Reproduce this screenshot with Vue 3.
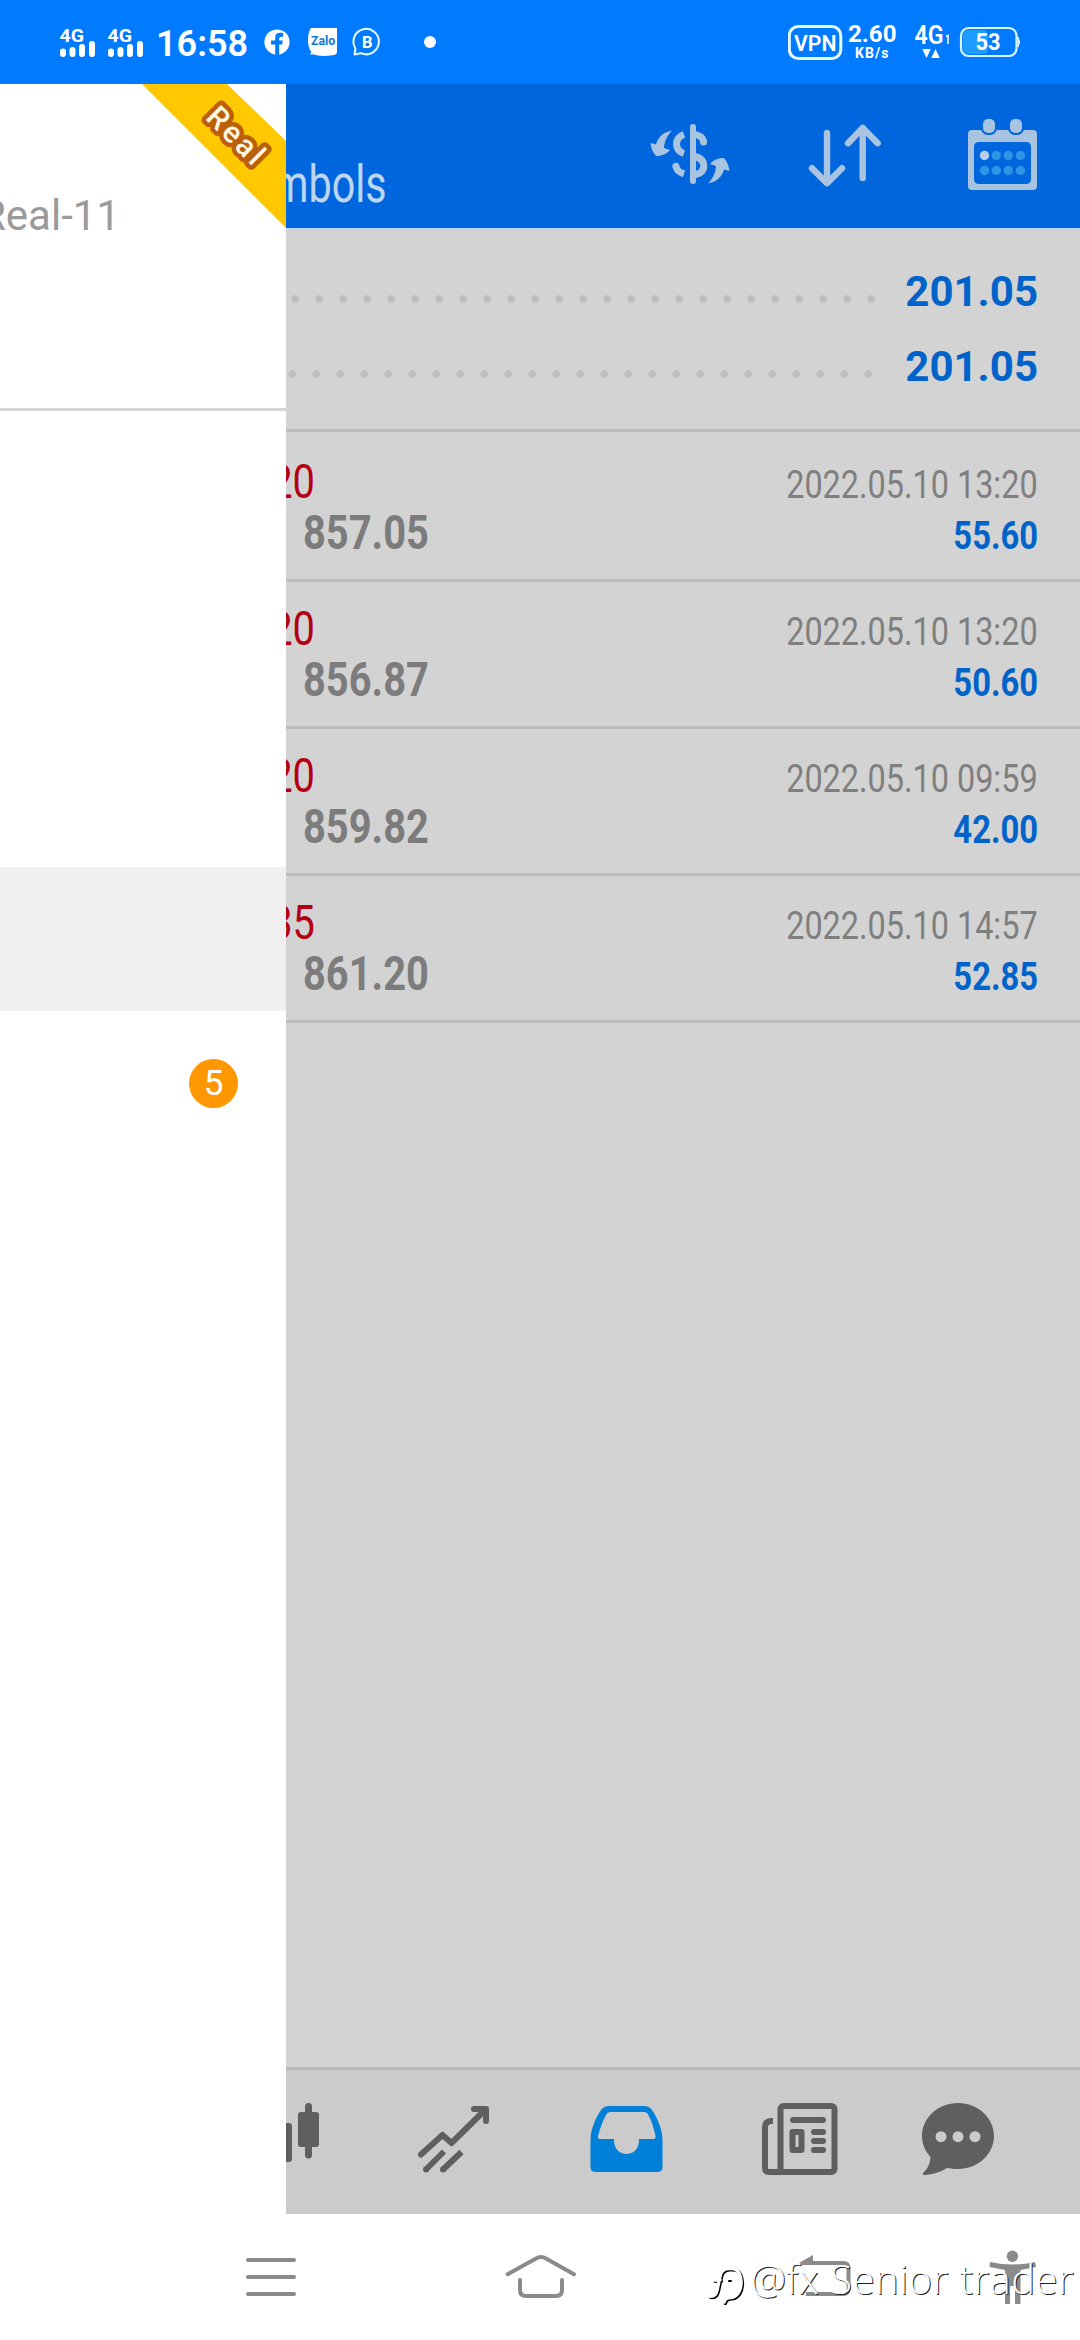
<script setup>
const deals = [
  { open: '20', close: '857.05', time: '2022.05.10 13:20', profit: '55.60' },
  { open: '20', close: '856.87', time: '2022.05.10 13:20', profit: '50.60' },
  { open: '20', close: '859.82', time: '2022.05.10 09:59', profit: '42.00' },
  { open: '35', close: '861.20', time: '2022.05.10 14:57', profit: '52.85' },
]
const calendarDots = [996.3, 1008.3, 1020.4]
const swapArrow =
  'M672 130.5C662 132.5 658 138 656 144.5L650.5 143C651 148 653.5 154 656.5 156C661 156.3 667 154 670 150L664 148C664.5 141 667 136 672 130.5Z'
</script>

<template>
  <div class="screen">
    <header class="status">
      <svg v-for="n in 2" :key="n" class="signal" viewBox="58 20 40 44" width="40" height="44">
        <text x="59.5" y="41.6" font-size="19" font-weight="700" textLength="24.5" lengthAdjust="spacingAndGlyphs">4G</text>
        <path d="M63 51.5V54M72.5 50V54M82 47V54M92 44V54" stroke="#fff" stroke-width="6" stroke-linecap="round" />
      </svg>
      <span class="clock">16:58</span>
      <svg class="fb" viewBox="264 29 26 26" width="26" height="26">
        <circle cx="277" cy="42" r="12.6" fill="#fff" />
        <path d="M275.2 55V44.6H271V40.4H275.2V38.2C275.2 34 277.6 32.2 283 33.1V36.8C280.2 36.5 279.2 37.1 279.2 39V40.4H282.8L282.2 44.6H279.2V55Z" fill="#007bff" />
      </svg>
      <svg class="zalo" viewBox="308 27 30 29" width="30" height="29">
        <path d="M311 27H337V51Q337 54 332 54.3C325 55.5 317 55 313.5 53.3Q311 54 310 53Q312 51.5 311 50.5C307 45 307 33 311 27Z" fill="#fff" />
        <text x="311" y="44.3" font-size="12" font-weight="700" class="blue" textLength="24" lengthAdjust="spacingAndGlyphs">Zalo</text>
      </svg>
      <svg class="biz" viewBox="352 27 30 30" width="30" height="30">
        <path d="M354.5 54.5L355.5 48.5A12.7 12.7 0 1 1 361 53.2Z" fill="none" stroke="#e6fbff" stroke-width="2" stroke-linejoin="round" />
        <text x="362" y="47.8" font-size="16" font-weight="700" textLength="10.5" lengthAdjust="spacingAndGlyphs">B</text>
      </svg>
      <i class="more-dot"></i>
      <span class="spacer"></span>
      <svg viewBox="788 12 236 60" width="236" height="60">
        <rect x="789.3" y="26.5" width="51.5" height="32" rx="9" fill="none" stroke="#e6fbff" stroke-width="3" />
        <text x="794" y="51" font-size="21.5" font-weight="600" textLength="42.5" lengthAdjust="spacingAndGlyphs">VPN</text>
        <text x="848" y="42" font-size="24" font-weight="700" textLength="48.5" lengthAdjust="spacingAndGlyphs">2.60</text>
        <text x="855" y="58" font-size="14" font-weight="700" textLength="33.5" lengthAdjust="spacing">KB/s</text>
        <text x="914.5" y="44" font-size="25" font-weight="600" textLength="29" lengthAdjust="spacingAndGlyphs">4G</text>
        <path d="M946 36.5L948 35.5V44" stroke="#fff" stroke-width="1.5" fill="none" />
        <path d="M922.2 49H930.8L926.5 58ZM931.2 58H939.8L935.5 49Z" fill="#fff" />
        <rect x="963" y="30" width="25" height="24" rx="5" fill="#1f9cff" />
        <rect x="961" y="28" width="55.5" height="28" rx="7.5" fill="none" stroke="#d8f6ff" stroke-width="2.2" />
        <path d="M1018 37Q1021 42 1018 47Z" fill="#d8f6ff" stroke="#d8f6ff" />
        <text x="975.5" y="50.3" font-size="23.5" font-weight="700" textLength="25" lengthAdjust="spacingAndGlyphs">53</text>
      </svg>
    </header>

    <div class="body">
      <aside class="drawer">
        <div class="account">
          <span class="server">Real-11</span>
          <svg class="ribbon" viewBox="142 84 144 144" width="144" height="144">
            <path d="M142 84H227L286 141V228Z" fill="#ffc800" />
            <text transform="translate(204.5 118.5) rotate(45)" font-size="30" font-weight="500" textLength="68" lengthAdjust="spacing">Real</text>
          </svg>
        </div>
        <ul class="menu">
          <li></li>
          <li></li>
          <li></li>
          <li class="selected"></li>
          <li><b class="badge">5</b></li>
        </ul>
      </aside>

      <main class="history">
        <div class="toolbar">
          <span class="filter"><span>Symbols</span></span>
          <div class="actions">
            <svg viewBox="650 116 80 76" width="80" height="76">
              <g fill="none" stroke="#a8c4e0" stroke-width="7">
                <path d="M684 134.5C674 138 674 150 684 153.5" />
                <path d="M684 174C679.5 172.5 676.5 169.5 676 166.5" />
                <path d="M675.9 166.2V166.3M703.6 141.9V142" stroke-linecap="round" />
                <path d="M693 134.5C699 134.5 703 137.5 703.6 142" />
                <path d="M693 156C701 157.5 703.8 161.5 703.8 166C703.8 171 700 174.5 693 174.8" />
                <path d="M693 127V181" stroke-width="6" stroke-linecap="round" />
              </g>
              <g fill="#a8c4e0">
                <path :d="swapArrow" />
                <path :d="swapArrow" transform="rotate(180 690 157)" />
              </g>
            </svg>
            <svg class="sort" viewBox="808 116 76 76" width="76" height="76">
              <path d="M828 133V183M813 168.2L828 183.2L843 168.2M863.7 178V128M849 143.2L863.7 128L878.7 143.2" fill="none" stroke="#a8c4e0" stroke-width="6.4" stroke-linecap="round" stroke-linejoin="round" />
            </svg>
            <svg class="calendar" viewBox="967 116 71 76" width="71" height="76">
              <path fill-rule="evenodd" d="M972 130H1033Q1037 130 1037 134V186Q1037 190 1033 190H972Q968 190 968 186V134Q968 130 972 130ZM979 142Q974 142 974 147V179Q974 184 979 184H1026Q1031 184 1031 179V147Q1031 142 1026 142Z" fill="#a8c4e0" />
              <g fill="#a8c4e0" stroke="#0066dd" stroke-width="4" paint-order="stroke">
                <rect x="983" y="119" width="12" height="14" rx="5" />
                <rect x="1010" y="119" width="12" height="14" rx="5" />
              </g>
              <circle cx="984.5" cy="155.5" r="4.7" fill="#b8cfea" />
              <circle cx="984.5" cy="170.5" r="4.7" fill="#2e94e6" />
              <g v-for="x in calendarDots" :key="x" fill="#2e94e6">
                <circle :cx="x" cy="155.5" r="4.7" />
                <circle :cx="x" cy="170.5" r="4.7" />
              </g>
            </svg>
          </div>
        </div>

        <section class="totals">
          <div class="total"><i class="leader"></i><b>201.05</b></div>
          <div class="total"><i class="leader shifted"></i><b>201.05</b></div>
        </section>

        <ul class="deals">
          <li v-for="d in deals" :key="d.close" class="deal">
            <div class="prices">
              <span class="open"><span>{{ d.open }}</span></span>
              <span class="close">{{ d.close }}</span>
            </div>
            <div class="result">
              <span class="time">{{ d.time }}</span>
              <span class="profit">{{ d.profit }}</span>
            </div>
          </li>
        </ul>

        <nav class="tabs">
          <svg viewBox="286 2100 36 76" width="36" height="76">
            <path d="M280 2123H289Q292 2123 292 2126V2159Q292 2162 289 2162H280Z" fill="#5f5f5f" />
            <rect x="298" y="2112" width="21" height="35" rx="3" fill="#5f5f5f" />
            <path d="M308.5 2106.5V2155" stroke="#5f5f5f" stroke-width="7" stroke-linecap="round" />
          </svg>
          <svg class="trend" viewBox="416 2100 76 76" width="76" height="76">
            <g fill="none" stroke="#5f5f5f" stroke-width="6">
              <path d="M421 2154.5L442.5 2135L451.5 2143L485 2110" stroke-linecap="round" stroke-linejoin="round" />
              <path d="M474 2109H486V2121" stroke-linecap="round" stroke-linejoin="round" />
              <path d="M425.5 2170L444 2151.5M442.5 2170L461.500 2152" />
              <path d="M426 2169.5V2169.4M443 2169.5V2169.4" stroke-linecap="round" />
            </g>
          </svg>
          <svg class="inbox" viewBox="588 2100 76 76" width="76" height="76">
            <path fill-rule="evenodd" d="M609 2106H644Q649 2106 652 2110C658 2119 662.5 2130 662.5 2140V2167Q662.5 2172 657.5 2172H595.5Q590.5 2172 590.5 2167V2140C590.5 2130 595 2119 601 2110Q604 2106 609 2106ZM610 2112Q607.5 2112 606 2115C602 2122 600 2129 598 2136Q597.5 2139 600 2139H614C613 2159 640 2159 639 2139H653Q656 2139 655.5 2136C654 2129 652 2122 648.5 2115Q647 2112 644 2112Z" fill="#0080d8" />
          </svg>
          <svg class="news" viewBox="760 2100 80 76" width="80" height="76">
            <g fill="none" stroke="#5f5f5f" stroke-width="6">
              <rect x="780.5" y="2106" width="54" height="66" rx="3" />
              <path d="M773 2121H771Q765 2121.5 765 2127V2168Q765 2172 769 2172H783" />
              <path d="M793 2120H823M814 2132H823M814 2141H823M814 2150H823" stroke-linecap="round" />
              <rect x="792.5" y="2132" width="9" height="18" stroke-linejoin="round" />
            </g>
          </svg>
          <svg class="chat" viewBox="920 2100 76 76" width="76" height="76">
            <path fill-rule="evenodd" d="M958 2103C978 2103 994 2118 994 2136C994 2154 978 2169 958 2169C954 2169 950 2168.5 947 2168C940 2172.5 932 2174.5 924.5 2175Q921.5 2174.5 923.5 2172.5C928.5 2168 930 2163 930.5 2157C925 2151 922 2144 922 2136C922 2118 938 2103 958 2103Z" fill="#5f5f5f" />
            <g fill="#cbcbcb"><circle cx="941" cy="2136.7" r="5.5" /><circle cx="958" cy="2136.7" r="5.5" /><circle cx="975" cy="2136.7" r="5.5" /></g>
          </svg>
        </nav>
      </main>
    </div>

    <footer class="sysnav">
      <svg viewBox="244 2246 54 60" width="54" height="60">
        <path d="M248 2260H294M248 2277H294M248 2294H294" stroke="#8a8a8a" stroke-width="4" stroke-linecap="round" />
      </svg>
      <svg class="home" viewBox="504 2246 74 60" width="74" height="60">
        <path d="M507.7 2274.3L536 2258.5Q541 2255.5 546 2258.5L574 2274.3M520 2280V2290Q520 2296 526 2296H556Q562 2296 562 2290V2280" fill="none" stroke="#8a8a8a" stroke-width="4" stroke-linecap="round" />
      </svg>
      <svg class="back" viewBox="796 2246 60 60" width="60" height="60">
        <path d="M799 2263L813 2255V2265H800Z" fill="#8a8a8a" />
        <path d="M811 2263H843Q848.5 2263 848.5 2268V2289Q848.5 2294 843 2294H806" fill="none" stroke="#8a8a8a" stroke-width="4" />
      </svg>
      <svg class="person" viewBox="986 2246 54 60" width="54" height="60">
        <circle cx="1012.4" cy="2256.3" r="5.7" fill="#8a8a8a" />
        <path d="M990 2262Q1013 2267 1035 2262L1036 2267L1020.5 2270V2304H1015V2286H1010V2304H1005V2270L989.5 2267Z" fill="#8a8a8a" />
      </svg>
      <div class="watermark">
        <svg viewBox="708 2262 40 46" width="40" height="46">
          <g fill="none" stroke-width="3.6" stroke-linecap="round">
            <g stroke="#000" transform="translate(1.300 1.300)">
              <path d="M735 2268.5H730Q723.5 2269 722 2276L719 2290Q717.5 2297 711.5 2296M716 2280H722" />
              <path d="M735 2268.5C746 2270 746 2296 733 2297.5Q727 2297.5 726 2302" />
            </g>
            <g stroke="#fff">
              <path d="M735 2268.5H730Q723.5 2269 722 2276L719 2290Q717.5 2297 711.5 2296M716 2280H722" />
              <path d="M735 2268.5C746 2270 746 2296 733 2297.5Q727 2297.5 726 2302" />
            </g>
            <path d="M731 2281H733" stroke="#000" stroke-width="2" />
          </g>
        </svg>
        <span>@fx Senior trader</span>
      </div>
    </footer>
  </div>
</template>

<style>
body {
  margin: 0;
  background: #fff;
}
</style>

<style scoped>
.screen {
  width: 1080px;
  height: 2340px;
  display: flex;
  flex-direction: column;
  overflow: hidden;
  font-family: Roboto, "Liberation Sans", sans-serif;
  background: #fff;
}
svg {
  display: block;
  flex: none;
}
ul {
  list-style: none;
  margin: 0;
  padding: 0;
}

.status {
  height: 84px;
  flex: none;
  box-sizing: border-box;
  padding: 0 56px 0 58px;
  display: flex;
  align-items: center;
  background: #007bff;
  color: #fff;
}
.status text {
  fill: #fff;
}
.status text.blue {
  fill: #0a78d8;
}
.signal {
  margin-right: 8px;
}
.clock {
  width: 92px;
  margin-left: 2px;
  font-size: 36px;
  font-weight: 600;
  line-height: 46px;
  padding-top: 3px;
}
.fb {
  margin-left: 16px;
}
.zalo {
  margin-left: 18px;
}
.biz {
  margin-left: 14px;
}
.more-dot {
  width: 12px;
  height: 12px;
  margin-left: 42px;
  border-radius: 50%;
  background: #fff;
}
.spacer {
  flex: 1;
}

.body {
  height: 2130px;
  flex: none;
  display: flex;
}

.drawer {
  width: 286px;
  flex: none;
  overflow: hidden;
  background: #fff;
}
.account {
  height: 324px;
  display: flex;
  justify-content: space-between;
  border-bottom: 3px solid #d6d6d6;
}
.server {
  width: 120px;
  display: flex;
  justify-content: flex-end;
  margin-top: 108px;
  font-size: 42px;
  line-height: 48px;
  white-space: nowrap;
  color: #9a9a9a;
}
.ribbon text {
  fill: #fff8e0;
  stroke: #bb5f0a;
  stroke-width: 9px;
  stroke-linejoin: round;
  paint-order: stroke;
}
.menu {
  padding-top: 24px;
}
.menu li {
  height: 144px;
  display: flex;
  align-items: center;
  justify-content: flex-end;
  padding-right: 48px;
}
.menu .selected {
  background: #f0f0f0;
}
.badge {
  width: 49px;
  height: 49px;
  border-radius: 50%;
  background: #ff9800;
  color: #fff;
  font-size: 35px;
  font-weight: 400;
  line-height: 50px;
  text-align: center;
}

.history {
  width: 794px;
  display: flex;
  flex-direction: column;
  overflow: hidden;
  background: #d3d3d3;
}
.toolbar {
  height: 144px;
  flex: none;
  display: flex;
  justify-content: space-between;
  background: #0066dd;
  border-bottom: 2px solid #b9d8f5;
}
.filter {
  width: 101px;
  display: flex;
  justify-content: flex-end;
  margin-top: 73px;
  font-size: 51px;
  line-height: 56px;
  color: #bed6f0;
}
.filter span {
  transform: scaleX(0.81);
  transform-origin: right;
}
.actions {
  display: flex;
  margin: 32px 42px 0 0;
}
.sort {
  margin-left: 77px;
}
.calendar {
  margin-left: 84px;
}

.totals {
  flex: none;
  padding: 24px 42px 25px 0;
  border-bottom: 3px solid #bcbcbc;
}
.total {
  height: 75px;
  display: flex;
  justify-content: flex-end;
  font-size: 42px;
  line-height: 75px;
  color: #0063c9;
}
.leader {
  flex: 1;
  height: 24px;
  margin: 33px 22px 0 0;
  background: radial-gradient(circle at center, #bebebe 3.3px, transparent 4.2px) right top / 24px 24px;
}
.leader.shifted {
  margin-right: 25px;
}

.deals {
  padding-top: 3px;
}
.deal {
  height: 144px;
  display: flex;
  justify-content: space-between;
  border-bottom: 3px solid #bcbcbc;
}
.prices,
.result {
  display: flex;
  flex-direction: column;
  line-height: 51px;
}
.prices {
  padding-top: 21px;
  font-size: 48px;
}
.open {
  width: 29px;
  display: flex;
  justify-content: flex-end;
  color: #b30013;
}
.open span {
  transform: scaleX(0.83);
  transform-origin: right;
}
.close {
  margin-left: 17px;
  font-weight: 700;
  color: #7c7c7d;
  transform: scaleX(0.83);
  transform-origin: left;
}
.result {
  padding: 24px 42px 0 0;
  align-items: flex-end;
  font-size: 39.5px;
}
.time {
  color: #7f7f7f;
  transform: scaleX(0.82);
  transform-origin: right;
}
.profit {
  font-weight: 700;
  color: #0063c9;
  transform: scaleX(0.83);
  transform-origin: right;
}

.tabs {
  height: 144px;
  flex: none;
  margin-top: auto;
  display: flex;
  align-items: flex-start;
  box-sizing: content-box;
  border-top: 3px solid #bababa;
  background: #cbcbcb;
}
.tabs svg {
  margin-top: 30px;
}
.tabs .trend {
  margin-left: 94px;
}
.tabs .inbox {
  margin-left: 96px;
}
.tabs .news {
  margin-left: 96px;
}
.tabs .chat {
  margin-left: 80px;
}

.sysnav {
  height: 126px;
  flex: none;
  position: relative;
  display: flex;
  align-items: flex-start;
  box-sizing: border-box;
  padding: 32px 0 0 244px;
  background: #fff;
}
.home {
  margin-left: 206px;
}
.back {
  margin-left: 218px;
}
.person {
  margin-left: 130px;
}
.watermark {
  position: absolute;
  right: 6px;
  top: 38px;
  display: flex;
  color: #fff;
  font-family: "Open Sans", "Noto Sans", sans-serif;
  font-size: 40px;
  font-weight: 300;
  line-height: 54px;
  letter-spacing: 0.5px;
  white-space: nowrap;
  text-shadow: 1px 1px 0 #222;
}
.watermark svg {
  margin: 10px 4px 0 0;
}
</style>
